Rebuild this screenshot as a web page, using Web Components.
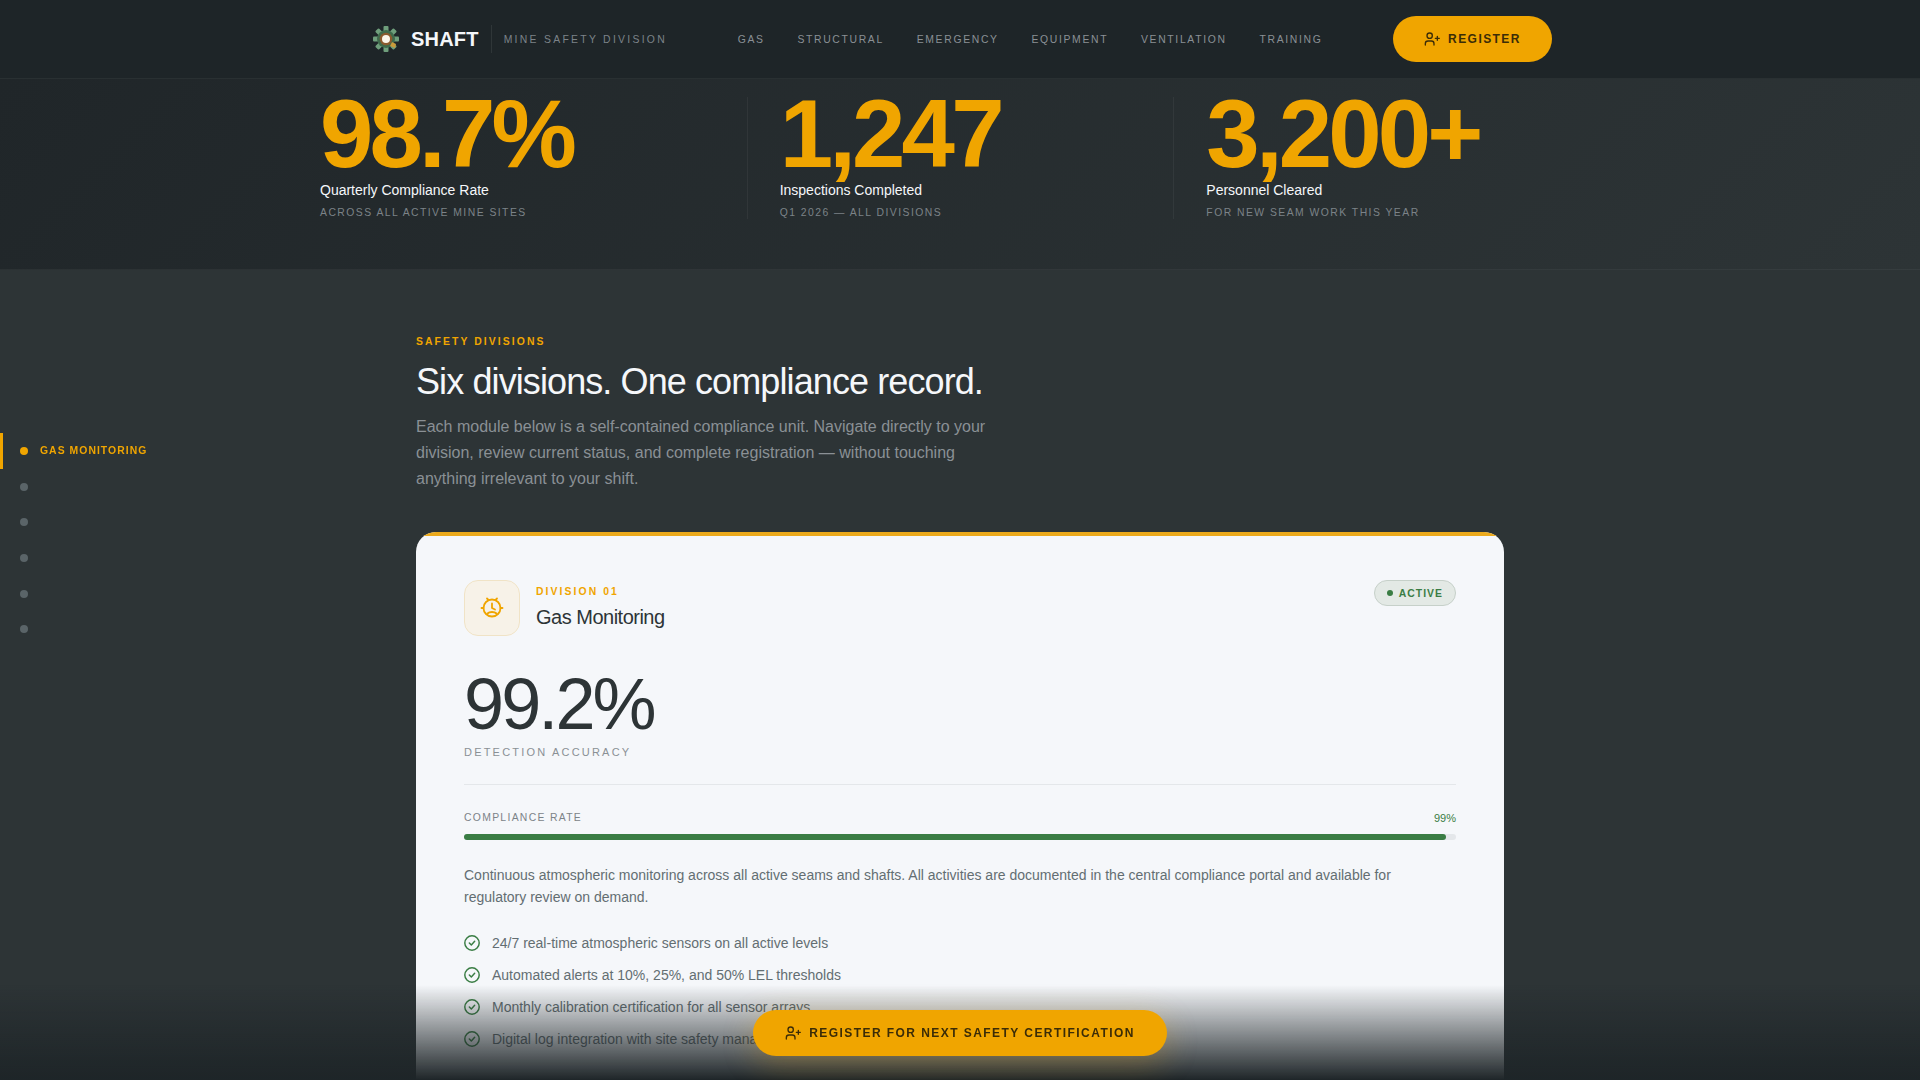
<!DOCTYPE html>
<html lang="en"><head><meta charset="utf-8"><title>SHAFT</title>
<style>
html,body{margin:0;height:1080px;overflow:hidden;background:#2d3436;font-family:"Liberation Sans",Arial,sans-serif}
</style></head><body>
<shaft-nav></shaft-nav>
<shaft-stats>
  <stat-item num="98.7%" label="Quarterly Compliance Rate" sub="ACROSS ALL ACTIVE MINE SITES"></stat-item>
  <stat-item class="d" num="1,247" label="Inspections Completed" sub="Q1 2026 — ALL DIVISIONS"></stat-item>
  <stat-item class="d" num="3,200+" label="Personnel Cleared" sub="FOR NEW SEAM WORK THIS YEAR"></stat-item>
</shaft-stats>
<division-section></division-section>
<side-rail></side-rail>
<bottom-cta></bottom-cta>
<script>
const UP='<svg width="SZ" height="SZ" viewBox="0 0 24 24" fill="none" stroke="currentColor" stroke-width="2" stroke-linecap="round" stroke-linejoin="round"><path d="M15 21v-2a4 4 0 0 0-4-4H6a4 4 0 0 0-4 4v2"/><circle cx="8.5" cy="7" r="4"/><path d="M20 8v6M23 11h-6"/></svg>';
function def(n,html){customElements.define(n,class extends HTMLElement{connectedCallback(){if(this.shadowRoot)return;const r=this.attachShadow({mode:'open'});r.innerHTML=typeof html==='function'?html(this):html;}})}
const UI='"Liberation Sans",Arial,sans-serif';
def('shaft-nav',`<style>
:host{display:block;height:78px;background:#1e2528;border-bottom:1px solid rgba(255,255,255,.05)}
.in{width:1184px;height:78px;margin:0 auto;display:flex;align-items:center}
.logo{display:flex;align-items:center;gap:11px;margin-left:4px}
svg.g{display:block}
b{font-size:20px;font-weight:700;color:#f5f7fa;letter-spacing:.01em}
.sep{width:1px;height:28px;background:rgba(255,255,255,.08);margin:0 12px}
.tag{font:400 10.4px ${UI};letter-spacing:.22em;color:#7c8388;width:234px;white-space:nowrap}
nav{display:flex;gap:32.8px;font:400 10.4px ${UI};letter-spacing:.16em;color:#8a9095;flex:1;white-space:nowrap}
.btn{display:flex;align-items:center;justify-content:center;gap:8px;width:159px;height:46px;background:#f0a500;border-radius:23px;color:#3b2c07;font:700 12px/44px ${UI};letter-spacing:.12em}
.btn span{margin-top:-1px}
</style><div class="in"><div class="logo"><svg class="g" width="28" height="28" viewBox="0 0 28 28"><g fill="#6f9f7c"><rect x="11.5" y="1" width="5" height="26" rx="1"/><rect x="1" y="11.5" width="26" height="5" rx="1"/><rect x="11.5" y="1" width="5" height="26" rx="1" transform="rotate(45 14 14)"/><rect x="11.5" y="1" width="5" height="26" rx="1" transform="rotate(-45 14 14)"/></g><circle cx="14" cy="14" r="9" fill="#3f6a4c"/><path d="M20 17l4 2-1 4-5-2z" fill="#c99a3a"/><circle cx="14" cy="14" r="6.3" fill="#8a5a2e"/><circle cx="14" cy="14" r="4" fill="#fbf5ea"/></svg><b>SHAFT</b></div><div class="sep"></div><div class="tag">MINE SAFETY DIVISION</div><nav><span>GAS</span><span>STRUCTURAL</span><span>EMERGENCY</span><span>EQUIPMENT</span><span>VENTILATION</span><span>TRAINING</span></nav><div class="btn">${UP.replace(/SZ/g,16)}<span>REGISTER</span></div></div>`);
def('shaft-stats',`<style>
:host{display:block;height:190px;border-bottom:1px solid rgba(255,255,255,.05);background:linear-gradient(135deg,#202629 0%,#2d3436 100%)}
.in{width:1280px;margin:0 auto;display:grid;grid-template-columns:repeat(3,1fr);padding-top:18px;box-sizing:border-box}
</style><div class="in"><slot></slot></div>`);
def('stat-item',e=>`<style>
:host{display:block;height:122px;box-sizing:border-box}
:host(.d){padding-left:32px;border-left:1px solid rgba(255,255,255,.05)}
.n{font-size:96px;line-height:75px;font-weight:700;color:#f0a500;letter-spacing:-.04em;white-space:nowrap;margin-top:-1px}
.l{font-size:14px;line-height:18px;color:#f5f7fa;margin-top:10px}
.s{font:400 10.4px/14px ${UI};letter-spacing:.14em;color:#7c8388;margin-top:7px;white-space:nowrap}
</style><div class="n">${e.getAttribute('num')}</div><div class="l">${e.getAttribute('label')}</div><div class="s">${e.getAttribute('sub')}</div>`);
def('division-section',`<style>
:host{display:block;width:1088px;margin:0 auto;padding-top:65px}
.k{font:700 10.4px/14px ${UI};letter-spacing:.2em;color:#f0a500}
h2{margin:10px 0 0;font-size:36px;line-height:46px;font-weight:400;color:#f5f7fa;letter-spacing:-.025em}
p{margin:9px 0 0;width:600px;font-size:16px;line-height:26px;color:#8a9095}
division-card{margin-top:40px}
</style><div class="k">SAFETY DIVISIONS</div><h2>Six divisions. One compliance record.</h2><p>Each module below is a self-contained compliance unit. Navigate directly to your division, review current status, and complete registration — without touching anything irrelevant to your shift.</p><division-card></division-card>`);
def('division-card',`<style>
:host{display:block;position:relative;overflow:hidden;background:#f5f7fa;border-radius:20px;padding:48px;color:#2d3436}
:host::before{content:"";position:absolute;left:0;right:0;top:0;height:4px;background:#ecaa1c}
.top{display:flex;align-items:center;gap:16px}
.ic{width:54px;height:54px;border:1px solid #f0e3c6;background:#f7f2e8;border-radius:14px;display:flex;align-items:center;justify-content:center;color:#f0a500}
.d{font:700 10.4px/14px ${UI};letter-spacing:.2em;color:#f0a500;margin-top:-2px}
.t{font-size:20px;line-height:26px;letter-spacing:-.025em;margin-top:5px}
.badge{margin-left:auto;align-self:flex-start;display:flex;align-items:center;gap:6px;height:24px;padding:0 12px;border:1px solid #c6d0c9;background:#e3e9e5;border-radius:13px;font:700 10.4px ${UI};letter-spacing:.1em;color:#3a7d44}
.badge i{width:6px;height:6px;border-radius:50%;background:#3a7d44}
.big{font-size:72px;line-height:72px;letter-spacing:-.04em;margin-top:32px}
.u{font:400 11px/14px ${UI};letter-spacing:.2em;color:#8a9095;margin-top:5px;padding-bottom:25px;border-bottom:1px solid #e4e7ea}
.r{display:flex;justify-content:space-between;margin-top:26px;font:400 10.4px/14px ${UI};letter-spacing:.125em;color:#7c8388}
.r span+span{letter-spacing:0;color:#3a7d44;font-size:11px}
.bar{height:6px;border-radius:3px;background:#e4e7ea;margin-top:9px}
.bar i{display:block;height:6px;width:99%;border-radius:3px;background:#3a7d44}
.txt{font-size:14px;line-height:22px;color:#636e72;margin:24px 0 0}
ul{list-style:none;margin:19px 0 0;padding:0}
</style><div class="top"><div class="ic"><svg width="24" height="24" viewBox="0 0 24 24" fill="none" stroke="currentColor" stroke-width="1.8" stroke-linecap="round" stroke-linejoin="round"><circle cx="12" cy="12" r="8.5"/><path d="M12 7.5V12l3 1.5M7.5 17.5c2-2 7-2 9 0M7 2.5l1.5 1.5M17 2.5 15.5 4M1.5 12h2M22.5 12h-2"/></svg></div><div><div class="d">DIVISION 01</div><div class="t">Gas Monitoring</div></div><div class="badge"><i></i>ACTIVE</div></div>
<div class="big">99.2%</div><div class="u">DETECTION ACCURACY</div>
<div class="r"><span>COMPLIANCE RATE</span><span>99%</span></div><div class="bar"><i></i></div>
<p class="txt">Continuous atmospheric monitoring across all active seams and shafts. All activities are documented in the central compliance portal and available for regulatory review on demand.</p>
<ul><check-item>24/7 real-time atmospheric sensors on all active levels</check-item><check-item>Automated alerts at 10%, 25%, and 50% LEL thresholds</check-item><check-item>Monthly calibration certification for all sensor arrays</check-item><check-item>Digital log integration with site safety management</check-item></ul>`);
def('check-item',`<style>
:host{display:flex;align-items:center;gap:12px;height:32px;font-size:14px;color:#636e72}
svg{color:#3a7d44;flex:none}
</style><svg width="16" height="16" viewBox="0 0 24 24" fill="none" stroke="currentColor" stroke-width="2.2" stroke-linecap="round" stroke-linejoin="round"><circle cx="12" cy="12" r="10.8"/><path d="m8 12 3 3 5-5.5"/></svg><slot></slot>`);
def('side-rail',`<style>
:host{position:fixed;left:0;top:433px;display:block;font:700 10.4px ${UI};letter-spacing:.1em;color:#f0a500}
.row{display:flex;align-items:center;gap:12px;height:35.7px;padding-left:20px;box-sizing:border-box}
.row i{width:8px;height:8px;border-radius:50%;background:#5a6468;flex:none}
.on{border-left:3px solid #f0a500;padding-left:17px}
.on i{background:#f0a500}
</style><div class="row on"><i></i>GAS MONITORING</div><div class="row"><i></i></div><div class="row"><i></i></div><div class="row"><i></i></div><div class="row"><i></i></div><div class="row"><i></i></div>`);
def('bottom-cta',`<style>
:host{position:fixed;left:0;right:0;bottom:0;height:95px;display:flex;justify-content:center;background:linear-gradient(to bottom,rgba(30,37,40,0),#1e2528)}
.b{margin-top:25px;width:414px;height:46px;border-radius:23px;background:#f0a500;box-shadow:0 8px 32px rgba(240,165,0,.25);display:flex;align-items:center;justify-content:center;gap:8px;color:#3b2c07;font:700 12px ${UI};letter-spacing:.12em;white-space:nowrap}
</style><div class="b">${UP.replace(/SZ/g,16)}<span>REGISTER FOR NEXT SAFETY CERTIFICATION</span></div>`);
</script></body></html>
